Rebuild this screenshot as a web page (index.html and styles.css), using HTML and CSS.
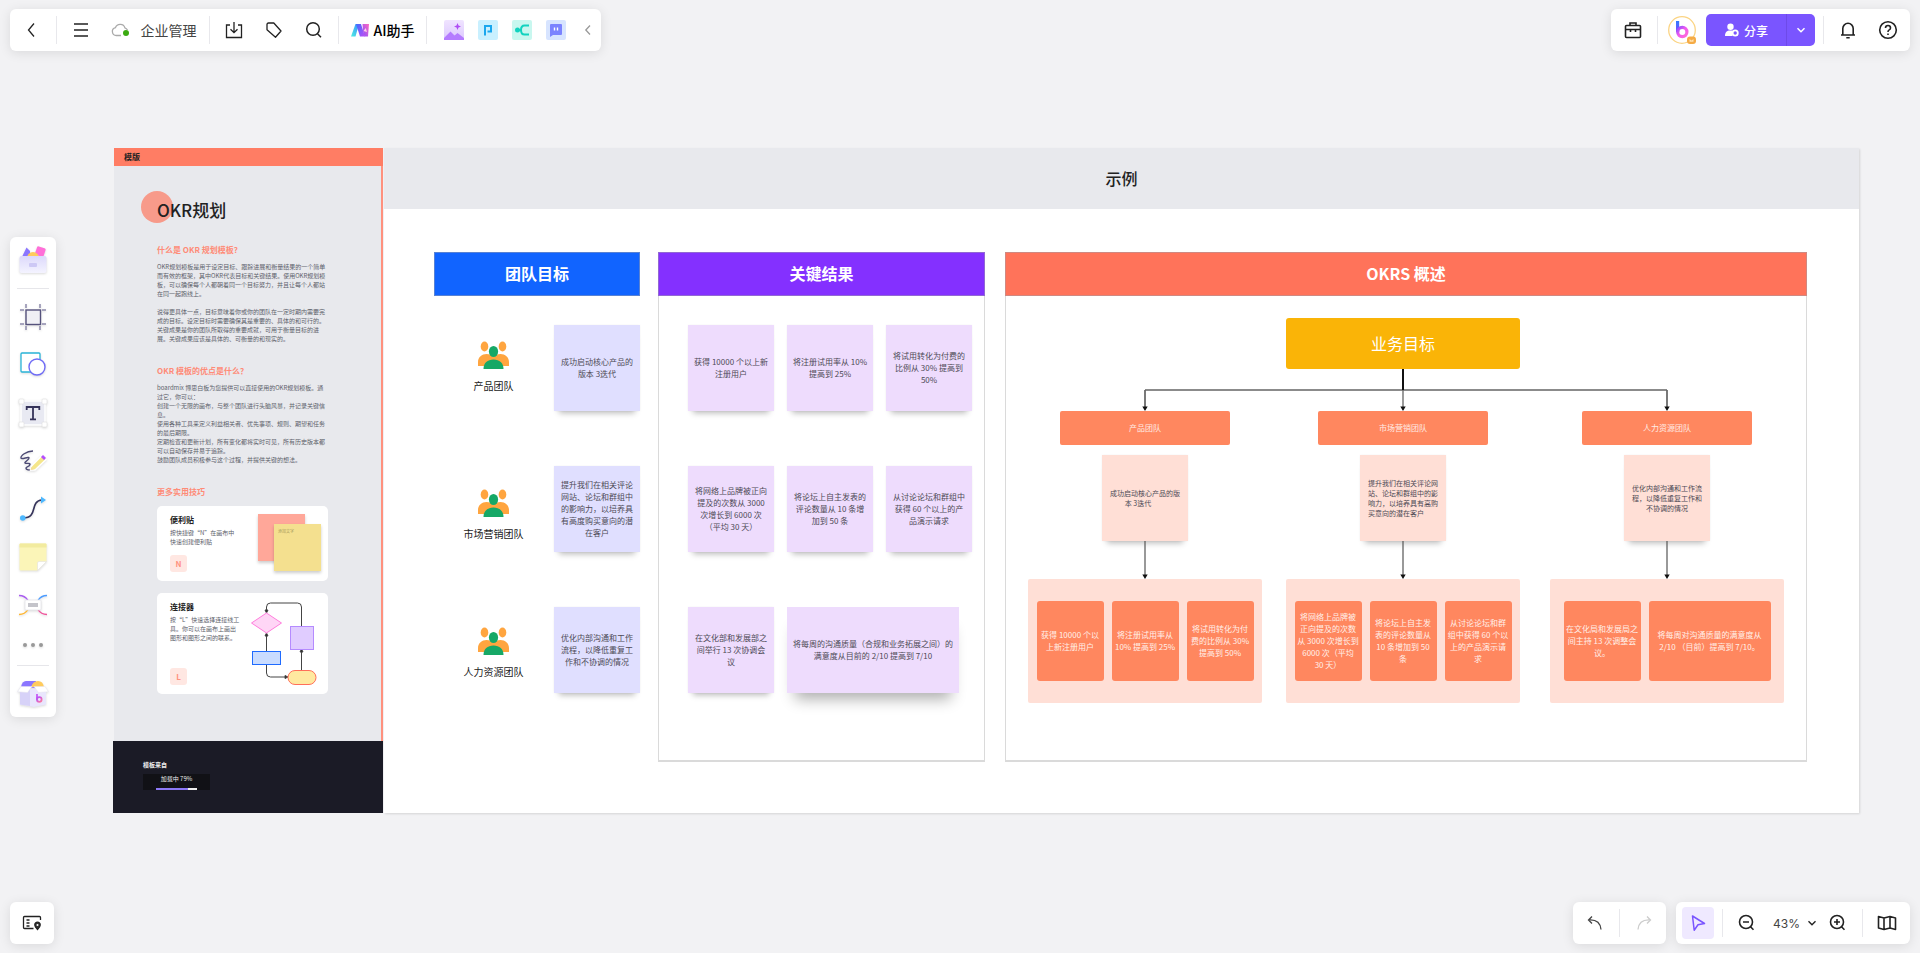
FILE: index.html
```html
<!DOCTYPE html>
<html lang="zh-CN">
<head>
<meta charset="utf-8">
<title>企业管理</title>
<link rel="stylesheet" href="styles.css">
</head>
<body>
<svg class="defs" aria-hidden="true">
  <defs>
    <linearGradient id="g-ai1" x1="0" y1="1" x2="1" y2="0"><stop offset="0" stop-color="#4ff0e0"/><stop offset="1" stop-color="#3a8bff"/></linearGradient>
    <linearGradient id="g-ai2" x1="0" y1="0" x2="1" y2="1"><stop offset="0" stop-color="#3f6bff"/><stop offset="1" stop-color="#c04df5"/></linearGradient>
    <linearGradient id="g-ai3" x1="0" y1="1" x2="1" y2="0"><stop offset="0" stop-color="#8a4dff"/><stop offset="1" stop-color="#ff6ac0"/></linearGradient>
    <linearGradient id="g-b" x1="0" y1="0" x2="1" y2="1"><stop offset="0" stop-color="#8d4dff"/><stop offset=".45" stop-color="#f05af0"/><stop offset="1" stop-color="#ff6ad5"/></linearGradient>
    <linearGradient id="g-stem" x1="0" y1="0" x2="0" y2="1"><stop offset="0" stop-color="#2f7bff"/><stop offset="1" stop-color="#7a4dff"/></linearGradient>
    <linearGradient id="g-pink" x1="0" y1="0" x2="1" y2="1"><stop offset="0" stop-color="#b44dff"/><stop offset="1" stop-color="#ff7a9c"/></linearGradient>
    <linearGradient id="g-img" x1="0" y1="0" x2="0" y2="1"><stop offset="0" stop-color="#f0e4ff"/><stop offset="1" stop-color="#dcc8ff"/></linearGradient>
    <linearGradient id="g-box" x1="0" y1="0" x2="0" y2="1"><stop offset="0" stop-color="#dcd9fb"/><stop offset="1" stop-color="#f4f3ff"/></linearGradient>
    <symbol id="people" viewBox="0 0 31 28">
      <g fill="#ffa53f"><ellipse cx="6.500" cy="5.500" rx="3.800" ry="5"/><ellipse cx="24.500" cy="5.500" rx="3.800" ry="5"/><path d="M0 25v-4c0-5 4-8 8.500-8 3 0 5 1 7 3 2-2 4-3 7-3 4.500 0 8.500 3 8.500 8v4z"/></g>
      <ellipse cx="15.500" cy="10.500" rx="4.600" ry="5.600" fill="#16a866"/>
      <path d="M5.500 28c0-6 4-9.500 10-9.500s10 3.500 10 9.500z" fill="#16a866"/>
    </symbol>
    <symbol id="arrow-down" viewBox="0 0 6 38">
      <path d="M3 0v34" stroke="#555" stroke-width="1.200"/><path d="M.3 33.500h5.400L3 38z" fill="#111"/>
    </symbol>
  </defs>
</svg>

<main class="canvas">
  <article class="template">
    <header class="template-bar">模版</header>
    <div class="template-body">
      <h1 class="template-title">OKR规划</h1>
      <section class="note">
        <h2>什么是 OKR 规划模板?</h2>
        <p>OKR规划模板是用于设定目标、跟踪进展和衡量结果的一个简单
而有效的框架，其中OKR代表目标和关键结果。使用OKR规划模
板，可以确保每个人都朝着同一个目标努力，并且让每个人都站
在同一起跑线上。

说得更具体一点，目标意味着你或你的团队在一定时期内需要完
成的目标。设定目标时需要确保其是重要的、具体的和可行的。
关键成果是你的团队所取得的重要成就，可用于衡量目标的进
展。关键成果应该是具体的、可衡量的和现实的。</p>
      </section>
      <section class="note">
        <h2>OKR 模板的优点是什么？</h2>
        <p>boardmix 博思白板为您提供可以直接使用的OKR规划模板。通
过它，你可以：
创建一个无限的画布，与整个团队进行头脑风暴，并记录关键信
息。
使用各种工具来定义利益相关者、优先事项、规则、期望和任务
的最后期限。
定期检查和更新计划，所有变化都将实时可见，所有历史版本都
可以自动保存并易于追踪。
鼓励团队成员积极参与这个过程，并提供关键的想法。</p>
      </section>
      <section class="note">
        <h2>更多实用技巧</h2>
        <div class="tips">
          <div class="tip">
            <div class="tip-text">
              <h3>便利贴</h3>
              <p>按快捷键“N”在画布中
快速创建便利贴</p>
              <kbd>N</kbd>
            </div>
            <div class="tip-notes"><span class="mini mini-pink"></span><span class="mini mini-yellow">添加文字</span></div>
          </div>
          <div class="tip tip-tall">
            <div class="tip-text">
              <h3>连接器</h3>
              <p>按“L”快速选择连接线工
具。你可以在画布上画出
图形和图形之间的联系。</p>
              <kbd>L</kbd>
            </div>
            <svg class="tip-flow" viewBox="0 0 66 84" fill="none" stroke="#444">
              <path d="M50.500 25V6q0-4-4-4h-27q-4 0-4 4v5M15.500 50V33M15.500 63v9q0 4 4 4h15M50.500 69V49"/>
              <path d="M14 9l1.500 3 1.500-3zM14 35l1.500-3 1.500 3zM34 74.500l3 1.500-3 1.500zM49 51l1.500-3 1.500 3z" fill="#222"/>
              <path d="M15.500 12l15 10-15 10-15-10z" fill="#ffd6f6" stroke="#ff7ddc"/>
              <rect x="39.500" y="25.500" width="23" height="23" fill="#e0ccff" stroke="#b58bff"/>
              <rect x="1.500" y="50.500" width="28" height="13" fill="#c9dcff" stroke="#1f6bff"/>
              <rect x="37" y="69.500" width="28" height="14" rx="7" fill="#ffe9a0" stroke="#ff6f59"/>
            </svg>
          </div>
        </div>
      </section>
    </div>
    <footer class="template-foot">
      <strong>模板来自</strong>
      <div class="loading"><label for="load">加载中 79%</label><progress id="load" max="100" value="79"></progress></div>
    </footer>
  </article>

  <article class="example">
    <header class="example-bar">示例</header>
    <div class="example-body">
      <section class="goals">
        <h2 class="col-head head-blue">团队目标</h2>
        <div class="team team-1"><svg><use href="#people"/></svg>产品团队</div>
        <div class="team team-2"><svg><use href="#people"/></svg>市场营销团队</div>
        <div class="team team-3"><svg><use href="#people"/></svg>人力资源团队</div>
        <div class="goal-list">
          <div class="sticky blue">成功启动核心产品的
版本 3迭代</div>
          <div class="sticky blue">提升我们在相关评论
网站、论坛和群组中
的影响力，以培养具
有高度购买意向的潜
在客户</div>
          <div class="sticky blue">优化内部沟通和工作
流程，以降低重复工
作和不协调的情况</div>
        </div>
      </section>

      <section class="results framed">
        <h2 class="col-head head-violet">关键结果</h2>
        <div class="result-grid">
          <div class="sticky lilac">获得 10000 个以上新
注册用户</div>
          <div class="sticky lilac">将注册试用率从 10%
提高到 25%</div>
          <div class="sticky lilac">将试用转化为付费的
比例从 30% 提高到
50%</div>
          <div class="sticky lilac">将网络上品牌被正向
提及的次数从 3000
次增长到 6000 次
（平均 30 天）</div>
          <div class="sticky lilac">将论坛上自主发表的
评论数量从 10 条增
加到 50 条</div>
          <div class="sticky lilac">从讨论论坛和群组中
获得 60 个以上的产
品演示请求</div>
          <div class="sticky lilac">在文化部和发展部之
间举行 13 次协调会
议</div>
          <div class="sticky lilac wide">将每周的沟通质量（合规和业务拓展之间）的
满意度从目前的 2/10 提高到 7/10</div>
        </div>
      </section>

      <section class="overview framed">
        <h2 class="col-head head-coral">OKRS 概述</h2>
        <div class="chart">
          <div class="business-goal">业务目标</div>
          <svg class="tree" viewBox="0 0 756 42" fill="none">
            <path d="M117 38V21M639 38V21" stroke="#222" stroke-width="1.200"/>
            <path d="M117 21h522M375 21v17" stroke="#666" stroke-width="1.300"/>
            <path d="M375 0v21" stroke="#111" stroke-width="2"/>
            <path d="M114.300 37.500h5.400L117 42zM372.300 37.500h5.400L375 42zM636.300 37.500h5.400L639 42z" fill="#111"/>
          </svg>
          <div class="branch">
            <h3>产品团队</h3>
            <div class="sticky blush">成功启动核心产品的版
本 3迭代　　</div>
            <svg class="down"><use href="#arrow-down"/></svg>
            <div class="group">
              <div class="tile">获得 10000 个以
上新注册用户</div>
              <div class="tile">将注册试用率从
10% 提高到 25%</div>
              <div class="tile">将试用转化为付
费的比例从 30%
提高到 50%</div>
            </div>
          </div>
          <div class="branch branch-mid">
            <h3>市场营销团队</h3>
            <div class="sticky blush">提升我们在相关评论网
站、论坛和群组中的影
响力，以培养具有高购
买意向的潜在客户　　</div>
            <svg class="down"><use href="#arrow-down"/></svg>
            <div class="group">
              <div class="tile">将网络上品牌被
正向提及的次数
从 3000 次增长到
6000 次（平均
30 天）</div>
              <div class="tile">将论坛上自主发
表的评论数量从
10 条增加到 50
条</div>
              <div class="tile">从讨论论坛和群
组中获得 60 个以
上的产品演示请
求</div>
            </div>
          </div>
          <div class="branch branch-end">
            <h3>人力资源团队</h3>
            <div class="sticky blush">优化内部沟通和工作流
程，以降低重复工作和
不协调的情况</div>
            <svg class="down"><use href="#arrow-down"/></svg>
            <div class="group">
              <div class="tile tile-mid">在文化局和发展局之
间主持 13 次调整会
议。</div>
              <div class="tile tile-wide">将每周对沟通质量的满意度从
2/10 （目前）提高到 7/10。</div>
            </div>
          </div>
        </div>
      </section>
    </div>
  </article>
</main>

<nav class="panel bar-top-left">
  <button class="btn btn-back" aria-label="返回"><svg width="20" height="20" viewBox="0 0 20 20"><path d="M13 3.500L7.500 10l5.500 6.500"/></svg></button>
  <i class="sep"></i>
  <button class="btn" aria-label="菜单"><svg width="20" height="20" viewBox="0 0 20 20"><path d="M3 4h14M3 10h14M3 16h14"/></svg></button>
  <button class="btn btn-file"><svg width="20" height="20" viewBox="0 0 20 20"><path d="M11 15.500H6.500a4 4 0 0 1-1-7.900 5 5 0 0 1 9.500.4q1.500.5 2.500 2" stroke="#aaa"/><circle cx="16" cy="13" r="3" fill="#3cab12" stroke="none"/></svg>企业管理</button>
  <i class="sep"></i>
  <button class="btn" aria-label="导出"><svg width="20" height="20" viewBox="0 0 20 20"><path d="M6 5H2.500v12.500h15V5H14M10 2v10.500M6.500 9.200l3.500 3.500 3.500-3.500"/></svg></button>
  <button class="btn" aria-label="标签"><svg width="20" height="20" viewBox="0 0 20 20"><path d="M3 4.500q0-1.500 1.500-1.500h5.300l7.200 8-5.500 6.300L3 9.800z" stroke-linejoin="round"/></svg></button>
  <button class="btn" aria-label="搜索"><svg width="20" height="20" viewBox="0 0 20 20"><circle cx="9" cy="9" r="6.300" stroke-width="1.500"/><path d="M13.500 13.700l3.500 3.500" stroke-width="1.500"/></svg></button>
  <i class="sep"></i>
  <button class="btn btn-ai"><svg width="20" height="20" viewBox="0 0 20 20" stroke="none"><path stroke="none" d="M5.500 4H9L5.500 16.500H1z" fill="url(#g-ai1)"/><path stroke="none" d="M6 4h5l4 12.500H10z" fill="url(#g-ai2)"/><path stroke="none" d="M12.500 4H19l-1 12.500h-3.500L13 11z" fill="url(#g-ai3)"/><path stroke="none" d="M13.500 11l2.200-3 1.300 4z" fill="#ffd0e6"/></svg>AI助手</button>
  <i class="sep"></i>
  <div class="apps">
    <button class="app" aria-label="AI图片"><svg width="20" height="20" viewBox="0 0 20 20"><rect width="20" height="20" rx="2" fill="url(#g-img)"/><path d="M0 18l6.500-6.500 4 4 3-2.500 6.500 5v2H0z" fill="#b57cff"/><path d="M13.500 3l1 2.500 2.500 1-2.500 1-1 2.500-1-2.500-2.500-1 2.500-1z" fill="#b04cf5"/></svg></button>
    <button class="app" aria-label="演示"><svg width="20" height="20" viewBox="0 0 20 20"><rect width="20" height="20" rx="2" fill="#c9f0ff"/><path d="M7 15.500V6h6v5.500H9.500" fill="none" stroke="#1aa7ee" stroke-width="2"/></svg></button>
    <button class="app" aria-label="思维导图"><svg width="20" height="20" viewBox="0 0 20 20"><rect width="20" height="20" rx="2" fill="#c8f7ef"/><path d="M17 5.500h-4.500q-3.500 0-3.500 4.500t3.500 4.500H17M5 10h4" fill="none" stroke="#10d3bf" stroke-width="2"/><circle cx="5.500" cy="10" r="2.500" fill="#10d3bf"/></svg></button>
    <button class="app" aria-label="对话"><svg width="20" height="20" viewBox="0 0 20 20"><rect width="20" height="20" rx="2" fill="#d7e4ff"/><path d="M4 5q0-1 1-1h10q1 0 1 1v9q0 1-1 1H7l-3 2z" fill="#7b83ff"/><path d="M8.500 7.500v3M11.500 7.500v3" stroke="#fff" stroke-width="1.400"/></svg></button>
  </div>
  <button class="btn btn-fold" aria-label="收起"><svg width="12" height="12" viewBox="0 0 12 12"><path d="M8 1.500L3.800 6 8 10.500" stroke="#999"/></svg></button>
</nav>

<nav class="panel bar-top-right">
  <button class="btn" aria-label="工具箱"><svg class="heavy" width="20" height="20" viewBox="0 0 20 20"><rect x="2.500" y="5.500" width="15" height="12" rx="1"/><path d="M7 5.500V3h6v2.500M2.500 9.500h15M7.500 9.500V12M12.500 9.500V12"/></svg></button>
  <i class="sep"></i>
  <button class="btn" aria-label="账户"><svg width="30" height="30" viewBox="0 0 30 30"><circle cx="15" cy="15" r="13.300" stroke="#fbd483" fill="#fff"/><path d="M10.500 6.500v10" stroke="url(#g-stem)" stroke-width="3.200"/><path d="M9 6h3.200v11H9z" fill="url(#g-stem)" stroke="none"/><circle cx="15.300" cy="17" r="4.600" stroke="url(#g-b)" stroke-width="3.200"/><rect x="20" y="21.500" width="9" height="7.500" rx="3" fill="#f5ab45" stroke="none"/><path d="M22.500 24l2 1.500 2-1.500v2.800h-4z" fill="#ffe1b0" stroke="none"/></svg></button>
  <div class="share">
    <button class="share-main"><svg width="16" height="16" viewBox="0 0 16 16"><circle cx="6.500" cy="4.800" r="3.200" fill="#fff"/><path d="M1 14c0-4 2-5.500 5-5.500h2.500v5.500z" fill="#fff"/><circle cx="11.200" cy="11" r="2.600" stroke="#fff" stroke-width="1.800" fill="#7a55ff"/></svg>分享</button>
    <button class="share-more" aria-label="更多分享选项"><svg width="12" height="12" viewBox="0 0 12 12"><path d="M2.500 4.200L6 7.700l3.500-3.500" stroke="#fff" stroke-width="1.500" fill="none"/></svg></button>
  </div>
  <i class="sep"></i>
  <button class="btn" aria-label="通知"><svg class="heavy" width="20" height="20" viewBox="0 0 20 20"><path d="M3 15h14M4.800 15V8.500a5.200 5.200 0 0 1 10.400 0V15M8.300 17.800h3.400"/></svg></button>
  <button class="btn" aria-label="帮助"><svg class="heavy" width="20" height="20" viewBox="0 0 20 20"><circle cx="10" cy="10" r="8.300"/><path d="M7.500 8q0-2.500 2.500-2.500T12.500 8q0 1.200-1.300 1.900T10 12"/><path d="M10 13.500V15"/></svg></button>
</nav>

<nav class="panel toolbox">
  <button class="tool tool-edge" aria-label="素材"><svg width="30" height="30" viewBox="0 0 30 30"><path d="M3 13L8.500 1.500 12 5v9z" fill="#8b76ff"/><rect x="18" y="1" width="9" height="9" rx="1.500" transform="rotate(18 22 5)" fill="#ff6fd8"/><circle cx="15" cy="12" r="6" fill="#ffcb5c"/><rect x="1.500" y="10" width="27" height="17" rx="2" fill="url(#g-box)"/><rect x="11" y="17" width="8" height="4" rx="1" fill="#cdc8f5"/></svg></button>
  <i class="rule"></i>
  <button class="tool" aria-label="画框"><svg width="28" height="28" viewBox="0 0 28 28" fill="none" stroke="#55527c"><path d="M7 1v4M21 1v4M7 23v4M21 23v4M1 7h4M1 21h4M23 7h4M23 21h4" stroke="#8d8aac" stroke-width="1.500"/><rect x="7" y="7" width="14.500" height="14.500" fill="#f0f0f5" stroke-width="1.400"/></svg></button>
  <button class="tool" aria-label="形状"><svg width="28" height="28" viewBox="0 0 28 28" fill="#fff"><rect x="2" y="2" width="19" height="19" rx="1" stroke="#28b4d8" stroke-width="1.300"/><circle cx="18" cy="16" r="8" stroke="#6f6bf5" stroke-width="1.400"/></svg></button>
  <button class="tool" aria-label="文本"><svg width="30" height="30" viewBox="0 0 30 30"><rect x="3" y="3" width="24" height="24" fill="#e8e9f2" stroke="#fff" stroke-width="1.500"/><g fill="#fff" stroke="#ddd" stroke-width=".6"><rect x="1" y="1" width="5" height="5" rx="1"/><rect x="24" y="1" width="5" height="5" rx="1"/><rect x="1" y="24" width="5" height="5" rx="1"/><rect x="24" y="24" width="5" height="5" rx="1"/></g><path d="M8.700 12V9h12.600v3M15 9v12.200M12 21.300h6" fill="none" stroke="#35335a" stroke-width="1.800"/></svg></button>
  <button class="tool" aria-label="画笔"><svg width="30" height="30" viewBox="0 0 30 30" fill="none"><path d="M15 5C8 5 2.500 10 3 12s8-2 8 0-5 4-4 5 5-.5 5 1.500-4 2-4 3.500 2 2 4 2" stroke="#4c4a74" stroke-width="1.400"/><path d="M12.500 24l1-4L24 9.500l4 4L17 24z" fill="#f5e68a" stroke="#fff" stroke-width="1.500"/><path d="M23 11l2-2 3 3-2 2z" fill="#b44dff"/><path d="M12.500 24l.8-3.300 2.700 2.800z" fill="#f2dc98"/></svg></button>
  <button class="tool" aria-label="连线"><svg width="28" height="28" viewBox="0 0 28 28" fill="none"><path d="M4 23c16 0 6-17 19-18" stroke="#35335a" stroke-width="1.700"/><circle cx="3.800" cy="23" r="2.800" fill="#4db8ff"/><path d="M22 1.500l5 3.500-5 3.500z" fill="#4db8ff"/></svg></button>
  <button class="tool" aria-label="便签"><svg width="28" height="28" viewBox="0 0 28 28"><path d="M.5 1.500q0-1 1-1h25q1 0 1 1v17l-9 9h-17q-1 0-1-1z" fill="#fbf5b8"/><path d="M.5 4.500v-3q0-1 1-1h25q1 0 1 1v3z" fill="#f2eb9f"/><path d="M27.500 18.500l-9 9v-7.500q0-1.500 1.500-1.500z" fill="#fff" stroke="#ddd" stroke-width=".5"/></svg></button>
  <button class="tool" aria-label="思维导图"><svg width="28" height="28" viewBox="0 0 28 28" fill="none" stroke-width="1.400"><path d="M0 4.500q6 0 9 5" stroke="#a95cf0"/><path d="M28 4.500q-6 0-9 5" stroke="#4d9cff"/><path d="M0 23.500q6 0 9-5" stroke="#ffb733"/><path d="M28 23.500q-6 0-9-5" stroke="#f0559c"/><rect x="6" y="9" width="16" height="10" rx="1" fill="#fff" stroke="#e4e4ea" stroke-width=".8"/><rect x="9" y="12" width="10" height="4" fill="#c4c4ca"/></svg></button>
  <button class="tool tool-more" aria-label="更多"><svg width="28" height="8" viewBox="0 0 28 8" fill="#999"><circle cx="6" cy="4" r="2"/><circle cx="14" cy="4" r="2"/><circle cx="22" cy="4" r="2"/></svg></button>
  <i class="rule"></i>
  <button class="tool tool-edge" aria-label="资源库"><svg width="32" height="30" viewBox="0 0 32 30"><path d="M4 8q1-6 5-6h10v7z" fill="#8b76ff"/><path d="M14 8q2-6 7-6t6 6z" fill="#ffcb5c"/><path d="M3 10h26v15.500L17 28 3 25.500z" fill="#e9e6fd"/><path d="M3 10l10-1v18L3 25.500z" fill="#d7d2f8"/><path d="M4 7.500h11l-4.500 6-10-.8zM28 7.500H17l4.500 6 10-.8z" fill="#fff" stroke="#e2e0ef" stroke-width=".5"/><path d="M20 15v6" stroke="#c65cf5" stroke-width="1.800"/><circle cx="22.300" cy="20.500" r="2.300" fill="none" stroke="url(#g-pink)" stroke-width="1.800"/></svg></button>
</nav>

<nav class="panel bar-bottom-left">
  <button class="btn" aria-label="导航"><svg width="20" height="20" viewBox="0 0 20 20"><path d="M11.500 15.500H2.500q-1 0-1-1v-10q0-1 1-1h15q1 0 1 1V7M4.500 7h3M4.500 10h3M4.500 13h3"/><path d="M15.500 9.200a2.700 2.700 0 0 1 2.700 2.800c0 2-2.700 4.500-2.700 4.500S12.800 14 12.800 12a2.700 2.700 0 0 1 2.700-2.800z" fill="#333"/><circle cx="15.500" cy="12" r="1" fill="#fff" stroke="none"/></svg></button>
</nav>

<div class="bottom-right">
  <nav class="panel history">
    <button class="btn" aria-label="撤销"><svg width="20" height="20" viewBox="0 0 20 20"><path d="M7 3.500L3.500 7 7 10.500M3.500 7Q15 6 16 16.500" stroke="#444"/></svg></button>
    <i class="sep"></i>
    <button class="btn" aria-label="重做" disabled><svg width="20" height="20" viewBox="0 0 20 20"><path d="M13 3.500L16.500 7 13 10.500M16.500 7Q5 6 4 16.500" stroke="#ccc"/></svg></button>
  </nav>
  <nav class="panel zoom">
    <button class="pointer" aria-label="选择"><svg width="20" height="20" viewBox="0 0 20 20"><path d="M4.500 3l12 7.500-6.500 1.300-3.800 5.400z" fill="none" stroke="#7a55ff" stroke-width="1.500" stroke-linejoin="round"/></svg></button>
    <i class="sep sep-tool"></i>
    <button class="btn" aria-label="缩小"><svg class="heavy" width="20" height="20" viewBox="0 0 20 20"><circle cx="9" cy="9" r="6.500"/><path d="M6 9h6M13.500 13.700l3 3"/></svg></button>
    <button class="zoom-value">43%<svg width="12" height="12" viewBox="0 0 12 12"><path d="M2.500 4.200L6 7.700l3.500-3.500" stroke="#222" stroke-width="1.400" fill="none"/></svg></button>
    <button class="btn" aria-label="放大"><svg class="heavy" width="20" height="20" viewBox="0 0 20 20"><circle cx="9" cy="9" r="6.500"/><path d="M6 9h6M9 6v6M13.500 13.700l3 3"/></svg></button>
    <i class="sep"></i>
    <button class="btn" aria-label="地图"><svg class="heavy" width="20" height="20" viewBox="0 0 20 20"><path d="M1.500 3.500L7 5l6-1.500L18.500 5v11.500L13 15l-6 1.500L1.500 15zM7 5v11.500M13 3.500V15" stroke-linejoin="round"/></svg></button>
  </nav>
</div>
</body>
</html>
```
FILE: styles.css
```css
* { box-sizing: border-box; }
body {
  margin: 0;
  min-height: 100vh;
  background: #f2f2f4;
  color: #222;
  font-family: "Noto Sans CJK SC", "Noto Sans", sans-serif;
  overflow: hidden;
}
h1, h2, h3, p { margin: 0; font-weight: inherit; }
button { border: 0; padding: 0; background: none; font: inherit; color: inherit; cursor: pointer; }
.defs { position: absolute; width: 0; height: 0; }

/* Canvas */
.canvas { display: flex; align-items: stretch; padding: 148px 61px 0 113px; }

/* Template guide */
.template { display: flex; flex-direction: column; flex: none; width: 271px; padding-right: 1px; }
.template-bar { height: 18px; margin-left: 1px; padding-left: 10px; background: #ff7d64; font-size: 8px; line-height: 18px; font-weight: 700; }
.template-body { flex: 1; margin-left: 1px; padding: 32px 0 0 43px; background: #e8e9ed; border-right: 2px solid #ff917e; }
.template-title { position: relative; z-index: 0; margin-bottom: 22px; font-size: 17px; line-height: 24px; font-weight: 500; }
.template-title::before { content: ""; position: absolute; z-index: -1; left: -16px; top: -7px; width: 32px; height: 32px; border-radius: 50%; background: #f79a8a; }
.note { margin-bottom: 22px; color: #5d616b; }
.note h2 { margin-bottom: 6px; color: #ff8b77; font-size: 8px; line-height: 12px; font-weight: 700; }
.note p { font-size: 6px; line-height: 9px; white-space: pre; }
.tips { display: grid; gap: 12px; width: 171px; padding-top: 2px; }
.tip { display: flex; justify-content: space-between; height: 75px; padding: 8px 7px 9px 13px; border-radius: 5px; background: #fff; }
.tip-tall { height: 101px; padding-right: 11px; }
.tip-text { display: flex; flex-direction: column; align-items: flex-start; }
.tip h3 { margin-bottom: 2px; color: #222; font-size: 8px; line-height: 12px; font-weight: 700; }
.tip kbd { margin-top: auto; width: 17px; height: 17px; border-radius: 3px; background: #ffe7e2; color: #ff917e; font: 700 8px/17px "Noto Sans CJK SC", sans-serif; text-align: center; }
.tip-notes { position: relative; width: 63px; }
.mini { position: absolute; width: 47px; height: 47px; padding: 4px; font-size: 4px; line-height: 6px; color: #a89c5c; box-shadow: 0 2px 3px rgba(0, 0, 0, .2); }
.mini-pink { left: 0; top: 0; background: #ffa799; }
.mini-yellow { right: 0; bottom: 1px; background: #f4e08f; }
.tip-flow { width: 66px; height: 84px; }
.template-foot { height: 72px; padding: 19px 30px; background: #1b1b26; color: #eee; font-size: 6px; line-height: 10px; }
.template-foot strong { display: block; margin-bottom: 4px; }
.loading { display: flex; flex-direction: column; align-items: center; gap: 4px; width: 67px; height: 16px; background: #111116; }
.loading label { line-height: 10px; }
.loading progress { appearance: none; display: block; width: 41px; height: 2px; border: 0; background: #eee; }
.loading progress::-webkit-progress-bar { background: #eee; }
.loading progress::-webkit-progress-value { background: #8c78f5; }

/* Worked example */
.example { flex: 1; min-width: 0; background: #fff; box-shadow: 1px 1px 2px rgba(0, 0, 0, .12); }
.example-bar { height: 61px; background: #e8e9ed; font-size: 16px; line-height: 60px; font-weight: 500; text-align: center; }
.example-body { display: flex; padding: 43px 54px 51px 50px; }
.col-head { height: 44px; border: 1px solid rgba(160, 160, 170, .5); color: #fff; font-size: 16px; line-height: 40px; font-weight: 700; text-align: center; }
.head-blue { background: #1164ff; }
.head-violet { background: #8430ff; }
.head-coral { background: #ff735a; }
.framed { border: 1px solid #dadada; border-width: 0 1px 2px; }
.framed .col-head { margin: 0 -1px; }
.goals { position: relative; flex: none; width: 206px; }
.results { flex: none; width: 327px; height: 510px; margin-left: 18px; }
.overview { flex: 1; margin-left: 20px; }
.sticky { display: flex; align-items: center; justify-content: center; width: 86px; height: 86px; color: #4d4a55; font-size: 8px; line-height: 12px; text-align: center; white-space: pre; box-shadow: 0 7px 6px -5px rgba(0, 0, 0, .28), 0 0 2px rgba(0, 0, 0, .05); }
.blue { background: #e0dfff; }
.lilac { background: #eedcfd; }
.blush { background: #ffdfd6; font-size: 7px; line-height: 10px; }
.wide { grid-column: span 2; width: 172px; box-shadow: 0 14px 14px -8px rgba(0, 0, 0, .32); }
.goal-list { display: grid; justify-content: end; gap: 55px; padding-top: 29px; }
.team { position: absolute; display: flex; flex-direction: column; align-items: center; left: 0; width: 119px; gap: 10px; font-size: 10px; line-height: 14px; color: #222; }
.team svg { width: 31px; height: 28px; }
.team-1 { top: 89px; }
.team-2 { top: 237px; }
.team-3 { top: 375px; }
.result-grid { display: grid; grid-template-columns: repeat(3, 86px); gap: 55px 13px; padding: 29px 0 0 29px; }

/* OKR tree */
.chart { display: grid; grid-template-columns: 234px 24px 234px 30px 234px; padding: 22px 22px 0; }
.business-goal { grid-column: 3; justify-self: center; width: 234px; height: 51px; border-radius: 3px; background: #fab407; color: #fff; font-size: 16px; line-height: 51px; text-align: center; }
.tree { grid-column: 1 / -1; width: 756px; height: 42px; }
.branch { display: flex; flex-direction: column; align-items: center; grid-column: 1; }
.branch-mid { grid-column: 3; }
.branch-end { grid-column: 5; }
.branch h3 { width: 170px; height: 34px; margin-bottom: 10px; border-radius: 2px; background: #ff875f; color: #ffede6; font-size: 8px; line-height: 34px; text-align: center; }
.down { width: 6px; height: 38px; }
.group { display: flex; justify-content: center; gap: 8px; width: 234px; height: 124px; padding: 22px 0; border-radius: 2px; background: #ffdfd6; }
.tile { display: flex; align-items: center; justify-content: center; width: 67px; border-radius: 3px; background: #ff875f; color: #fff0ea; font-size: 8px; line-height: 12px; text-align: center; white-space: pre; }
.tile-mid { width: 77px; }
.tile-wide { width: 122px; }

/* Floating panels */
.panel { display: flex; align-items: center; height: 42px; border-radius: 6px; background: #fff; box-shadow: 0 2px 12px rgba(0, 0, 0, .1); }
.btn { display: flex; align-items: center; justify-content: center; width: 40px; height: 40px; }
.btn svg { flex: none; fill: none; stroke: #222; stroke-width: 1.3; }
.btn svg.heavy { stroke-width: 1.6; }
.sep { flex: none; width: 1px; height: 28px; margin: 0 4px; background: #e8e8ec; }
.bar-top-left { position: absolute; left: 10px; top: 9px; }
.btn-back { width: 42px; }
.btn-file { gap: 11px; width: 104px; font-size: 14px; color: #444; }
.btn-ai { gap: 3px; width: 79px; font-size: 14px; font-weight: 500; color: #000; }
.apps { display: flex; gap: 14px; padding: 0 9px 0 13px; }
.app { width: 20px; height: 20px; }
.app svg { display: block; }
.btn-fold { width: 26px; }
.bar-top-right { position: absolute; right: 10px; top: 9px; padding: 0 2px; }
.share { display: flex; height: 32px; margin: 0 4px; border-radius: 5px; background: #7a55ff; color: #fff; }
.share-main { display: flex; align-items: center; justify-content: center; gap: 4px; width: 81px; border-right: 1px solid #6e4ae8; font-size: 12px; font-weight: 500; }
.share-more { display: flex; align-items: center; justify-content: center; width: 28px; }
.toolbox { position: absolute; left: 10px; top: 237px; flex-direction: column; width: 46px; height: auto; }
.tool { display: flex; align-items: center; justify-content: center; width: 46px; height: 48px; }
.tool svg { filter: drop-shadow(0 1px 1px rgba(0, 0, 0, .14)); }
.tool-edge { height: 47px; }
.tool-more { height: 32px; }
.rule { width: 32px; height: 1px; margin: 4px 0; background: #e6e6ea; }
.bar-bottom-left { position: absolute; left: 10px; bottom: 9px; width: 44px; justify-content: center; }
.bottom-right { position: absolute; right: 10px; bottom: 9px; display: flex; gap: 10px; }
.history { padding: 0 2px; }
.zoom { padding: 0 3px 0 6px; }
.pointer { display: flex; align-items: center; justify-content: center; width: 32px; height: 32px; border-radius: 4px; background: #efe9ff; }
.sep-tool { margin-left: 8px; }
.zoom-value { display: flex; align-items: center; justify-content: space-between; width: 51px; padding: 0 0 0 6px; font-family: Inter, "Noto Sans", sans-serif; font-size: 12px; color: #444; }
```
